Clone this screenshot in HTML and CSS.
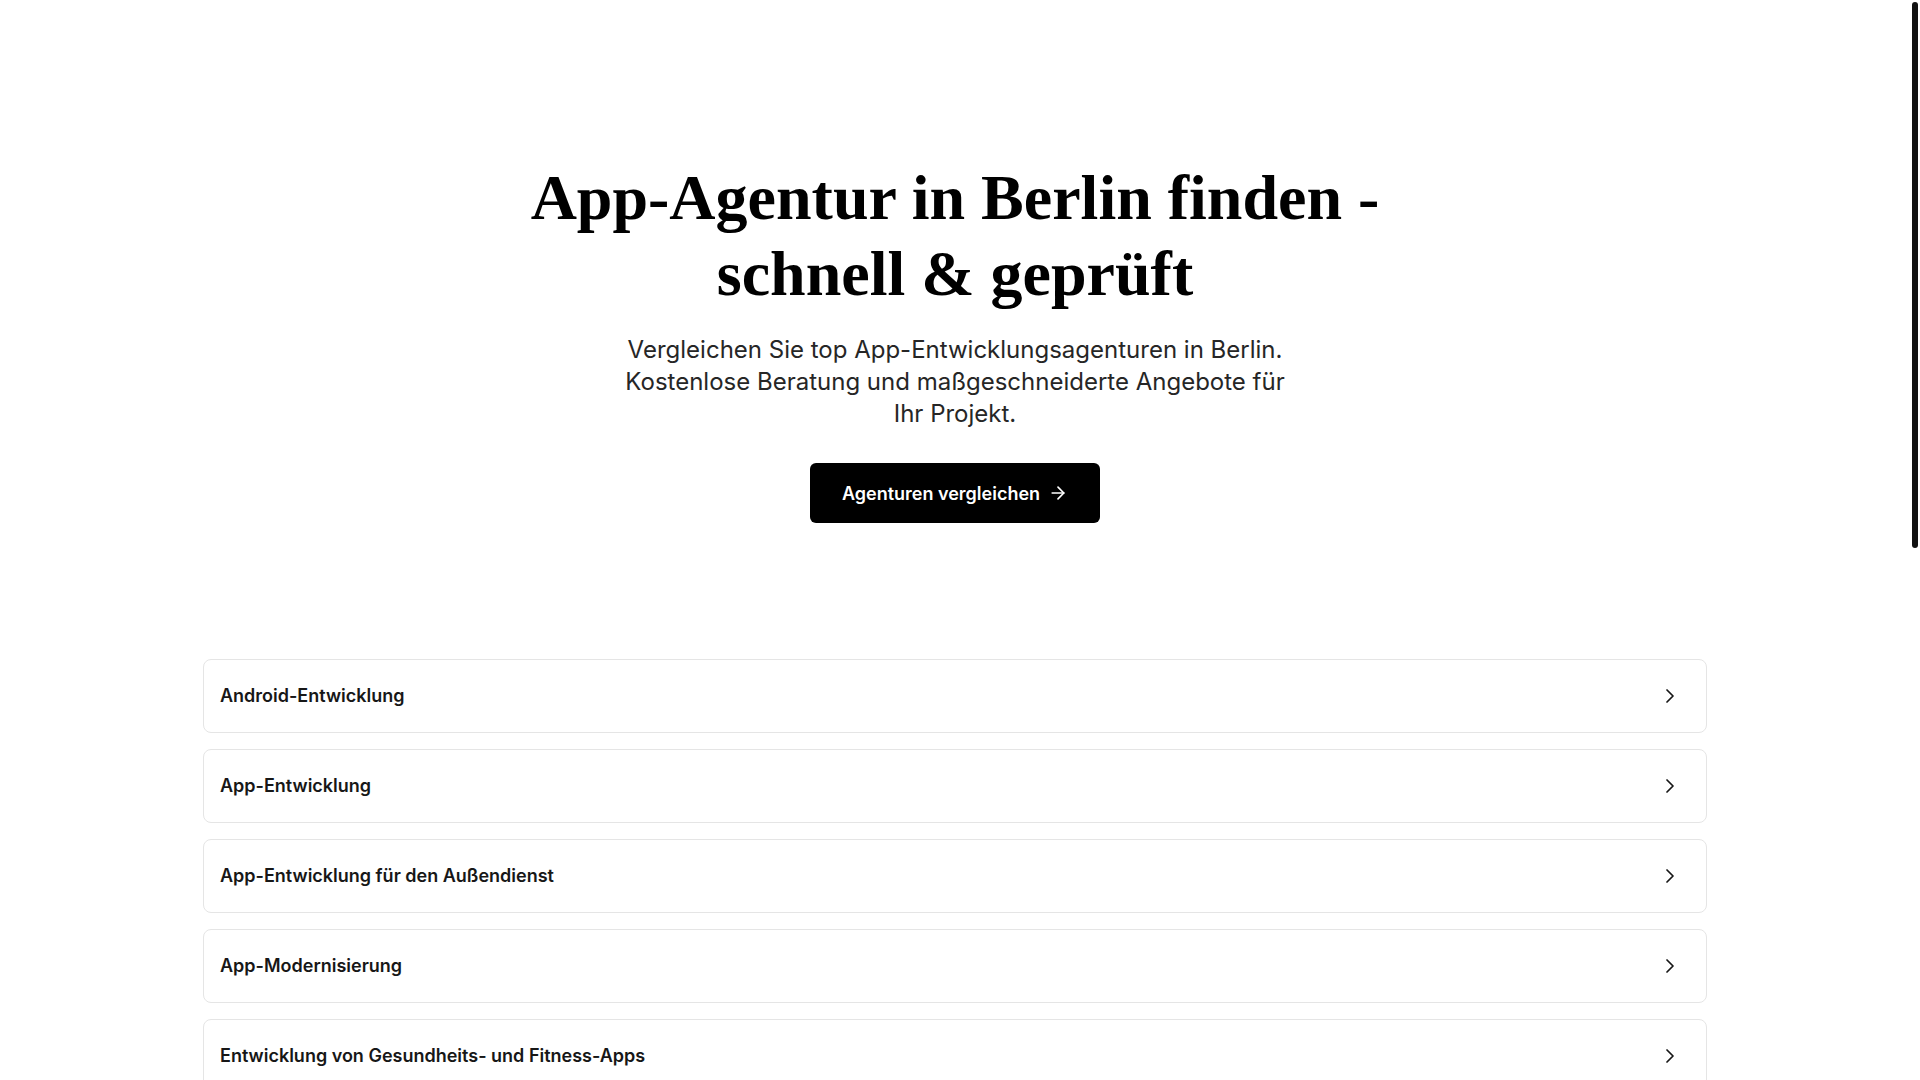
FILE: index.html
```html
<!DOCTYPE html>
<html lang="de">
<head>
  <meta charset="UTF-8">
  <title>App-Agentur in Berlin finden</title>
  <link rel="stylesheet" href="styles.css">
</head>
<body>

<!-- Hero -->
<section class="hero">
  <h1>App-Agentur in Berlin finden - schnell &amp; geprüft</h1>
  <p class="lead">Vergleichen Sie top App-Entwicklungsagenturen in Berlin. Kostenlose Beratung und maßgeschneiderte Angebote für Ihr Projekt.</p>
  <a class="cta" href="#leistungen">
    Agenturen vergleichen
    <svg width="20" height="20" viewBox="0 0 24 24" fill="none" stroke="currentColor" stroke-width="2" stroke-linecap="round" stroke-linejoin="round"><path d="M5 12h14"/><path d="m12 5 7 7-7 7"/></svg>
  </a>
</section>

<!-- Leistungen -->
<section class="services" id="leistungen">
  <ul class="service-list">
    <li><a class="service" href="#">Android-Entwicklung <svg class="chev" width="24" height="24" viewBox="0 0 24 24" fill="none" stroke="currentColor" stroke-width="1.75" stroke-linecap="round" stroke-linejoin="round"><path d="m9 18 6-6-6-6"/></svg></a></li>
    <li><a class="service" href="#">App-Entwicklung <svg class="chev" width="24" height="24" viewBox="0 0 24 24" fill="none" stroke="currentColor" stroke-width="1.75" stroke-linecap="round" stroke-linejoin="round"><path d="m9 18 6-6-6-6"/></svg></a></li>
    <li><a class="service" href="#">App-Entwicklung für den Außendienst <svg class="chev" width="24" height="24" viewBox="0 0 24 24" fill="none" stroke="currentColor" stroke-width="1.75" stroke-linecap="round" stroke-linejoin="round"><path d="m9 18 6-6-6-6"/></svg></a></li>
    <li><a class="service" href="#">App-Modernisierung <svg class="chev" width="24" height="24" viewBox="0 0 24 24" fill="none" stroke="currentColor" stroke-width="1.75" stroke-linecap="round" stroke-linejoin="round"><path d="m9 18 6-6-6-6"/></svg></a></li>
    <li><a class="service" href="#">Entwicklung von Gesundheits- und Fitness-Apps <svg class="chev" width="24" height="24" viewBox="0 0 24 24" fill="none" stroke="currentColor" stroke-width="1.75" stroke-linecap="round" stroke-linejoin="round"><path d="m9 18 6-6-6-6"/></svg></a></li>
    <li><a class="service" href="#">Flutter-Entwicklung <svg class="chev" width="24" height="24" viewBox="0 0 24 24" fill="none" stroke="currentColor" stroke-width="1.75" stroke-linecap="round" stroke-linejoin="round"><path d="m9 18 6-6-6-6"/></svg></a></li>
    <li><a class="service" href="#">Hybride App-Entwicklung <svg class="chev" width="24" height="24" viewBox="0 0 24 24" fill="none" stroke="currentColor" stroke-width="1.75" stroke-linecap="round" stroke-linejoin="round"><path d="m9 18 6-6-6-6"/></svg></a></li>
    <li><a class="service" href="#">iOS-Entwicklung <svg class="chev" width="24" height="24" viewBox="0 0 24 24" fill="none" stroke="currentColor" stroke-width="1.75" stroke-linecap="round" stroke-linejoin="round"><path d="m9 18 6-6-6-6"/></svg></a></li>
    <li><a class="service" href="#">Kotlin-Entwicklung <svg class="chev" width="24" height="24" viewBox="0 0 24 24" fill="none" stroke="currentColor" stroke-width="1.75" stroke-linecap="round" stroke-linejoin="round"><path d="m9 18 6-6-6-6"/></svg></a></li>
    <li><a class="service" href="#">React-Native-Entwicklung <svg class="chev" width="24" height="24" viewBox="0 0 24 24" fill="none" stroke="currentColor" stroke-width="1.75" stroke-linecap="round" stroke-linejoin="round"><path d="m9 18 6-6-6-6"/></svg></a></li>
    <li><a class="service" href="#">Swift-Entwicklung <svg class="chev" width="24" height="24" viewBox="0 0 24 24" fill="none" stroke="currentColor" stroke-width="1.75" stroke-linecap="round" stroke-linejoin="round"><path d="m9 18 6-6-6-6"/></svg></a></li>
    <li><a class="service" href="#">UX/UI-Design für Apps <svg class="chev" width="24" height="24" viewBox="0 0 24 24" fill="none" stroke="currentColor" stroke-width="1.75" stroke-linecap="round" stroke-linejoin="round"><path d="m9 18 6-6-6-6"/></svg></a></li>
    <li><a class="service" href="#">Wearable-App-Entwicklung <svg class="chev" width="24" height="24" viewBox="0 0 24 24" fill="none" stroke="currentColor" stroke-width="1.75" stroke-linecap="round" stroke-linejoin="round"><path d="m9 18 6-6-6-6"/></svg></a></li>
    <li><a class="service" href="#">Xamarin-Entwicklung <svg class="chev" width="24" height="24" viewBox="0 0 24 24" fill="none" stroke="currentColor" stroke-width="1.75" stroke-linecap="round" stroke-linejoin="round"><path d="m9 18 6-6-6-6"/></svg></a></li>
    <li><a class="service" href="#">Progressive Web Apps <svg class="chev" width="24" height="24" viewBox="0 0 24 24" fill="none" stroke="currentColor" stroke-width="1.75" stroke-linecap="round" stroke-linejoin="round"><path d="m9 18 6-6-6-6"/></svg></a></li>
  </ul>
</section>

<!-- eigene Scrollbar-Anzeige -->
<div class="scroll-thumb"></div>

</body>
</html>
```

FILE: styles.css
```css
html { background: #fff; }
body {
  margin: 0;
  padding-right: 10px;
  font-family: Inter, "Noto Sans", sans-serif;
  color: #171717;
  background: #fff;
}

/* schmale dunkle Scrollbar */
::-webkit-scrollbar { width: 0; }
.scroll-thumb {
  position: fixed; top: 2px; right: 2px;
  width: 6px; height: 546px;
  background: #111; border-radius: 3px;
}

.hero {
  display: flex; flex-direction: column; align-items: center;
  padding: 160px 16px 136px;
  text-align: center;
}
.hero h1 {
  margin: 0;
  max-width: 900px;
  font-family: "Liberation Serif", "Times New Roman", serif;
  font-weight: 700;
  font-size: 64px;
  line-height: 76px;
  color: #000;
}
.lead {
  margin: 22px 0 0;
  max-width: 672px;
  font-size: 24px;
  line-height: 32px;
  color: #262626;
}
.cta {
  display: inline-flex; align-items: center; gap: 8px;
  margin-top: 33px;
  height: 60px; padding: 0 32px;
  box-sizing: border-box;
  background: #000; color: #fff;
  border-radius: 6px;
  font-size: 18px; font-weight: 600;
  text-decoration: none;
}

.services {
  max-width: 1536px;
  margin: 0 auto;
  padding: 0 16px 140px;
  box-sizing: border-box;
}
.service-list {
  list-style: none; margin: 0; padding: 0;
  display: flex; flex-direction: column; gap: 16px;
}
.service {
  display: flex; align-items: center; justify-content: space-between;
  padding: 24px 24px 24px 16px;
  border: 1px solid #e5e5e5;
  border-radius: 8px;
  font-size: 18px; font-weight: 600; line-height: 24px;
  color: #171717;
  text-decoration: none;
}
.chev { flex: none; color: #171717; }
```
